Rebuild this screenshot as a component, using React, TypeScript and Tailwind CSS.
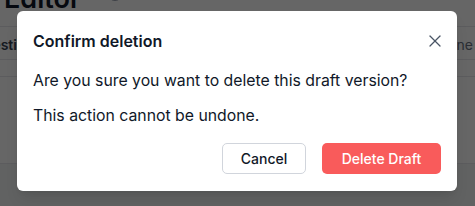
import React from "react";
import { X } from "lucide-react";

export default function App() {
  return (
    <div
      className="relative w-[475px] h-[206px] overflow-hidden bg-white"
      style={{ fontFamily: "Inter, 'Noto Sans', sans-serif" }}
    >
      {/* background page */}
      <div className="flex flex-col h-full">
        <div className="h-[27px] shrink-0 overflow-hidden border-b border-gray-200 flex items-start">
          <div className="mt-[-18px] ml-[4px] flex items-center gap-[26px]">
            <span className="text-[27px] leading-[34px] font-semibold text-gray-900">Editor</span>
            <span className="mt-[-12px] w-[16px] h-[16px] rounded-full border-[1.5px] border-gray-400 flex items-center justify-center text-[10px] text-gray-400">
              i
            </span>
          </div>
        </div>
        <div className="h-[33px] shrink-0 border-b border-gray-200 flex items-center pt-[3px] whitespace-nowrap overflow-hidden text-[14px]">
          <span className="ml-[-27px] w-[465px] shrink-0 font-semibold text-gray-700">Question</span>
          <span className="shrink-0 text-gray-500">Done count</span>
        </div>
        <div className="h-[17px] shrink-0 border-b border-gray-200" />
        <div className="h-[87px] shrink-0 border-b border-gray-200" />
        <div className="flex-1 bg-gray-100" />
      </div>

      {/* overlay */}
      <div className="absolute inset-0 bg-black/60" />

      {/* modal */}
      <div className="absolute left-[17px] top-[11px] w-[440px] h-[180px] bg-white rounded-[6px] shadow-lg flex flex-col pl-[16px] pr-[16px] pt-[18px] pb-[17px]">
        <div className="flex items-center justify-between h-[24px]">
          <h2 className="text-[16px] leading-[24px] font-semibold text-gray-900">Confirm deletion</h2>
          <button className="mr-[-6px] w-[24px] h-[24px] flex items-center justify-center text-gray-600">
            <X size={20} strokeWidth={1.5} />
          </button>
        </div>
        <div className="mt-[16px] text-[15.8px] leading-[24px] text-gray-900">
          <p>Are you sure you want to delete this draft version?</p>
          <p className="mt-[11px]">This action cannot be undone.</p>
        </div>
        <div className="mt-auto flex justify-end gap-[16px]">
          <button className="h-[31px] w-[84px] rounded-[5px] border border-gray-300 bg-white text-[14px] font-medium text-gray-900">
            Cancel
          </button>
          <button className="h-[31px] w-[119px] rounded-[5px] bg-[#f95b5b] text-[14px] font-medium text-white">
            Delete Draft
          </button>
        </div>
      </div>
    </div>
  );
}
